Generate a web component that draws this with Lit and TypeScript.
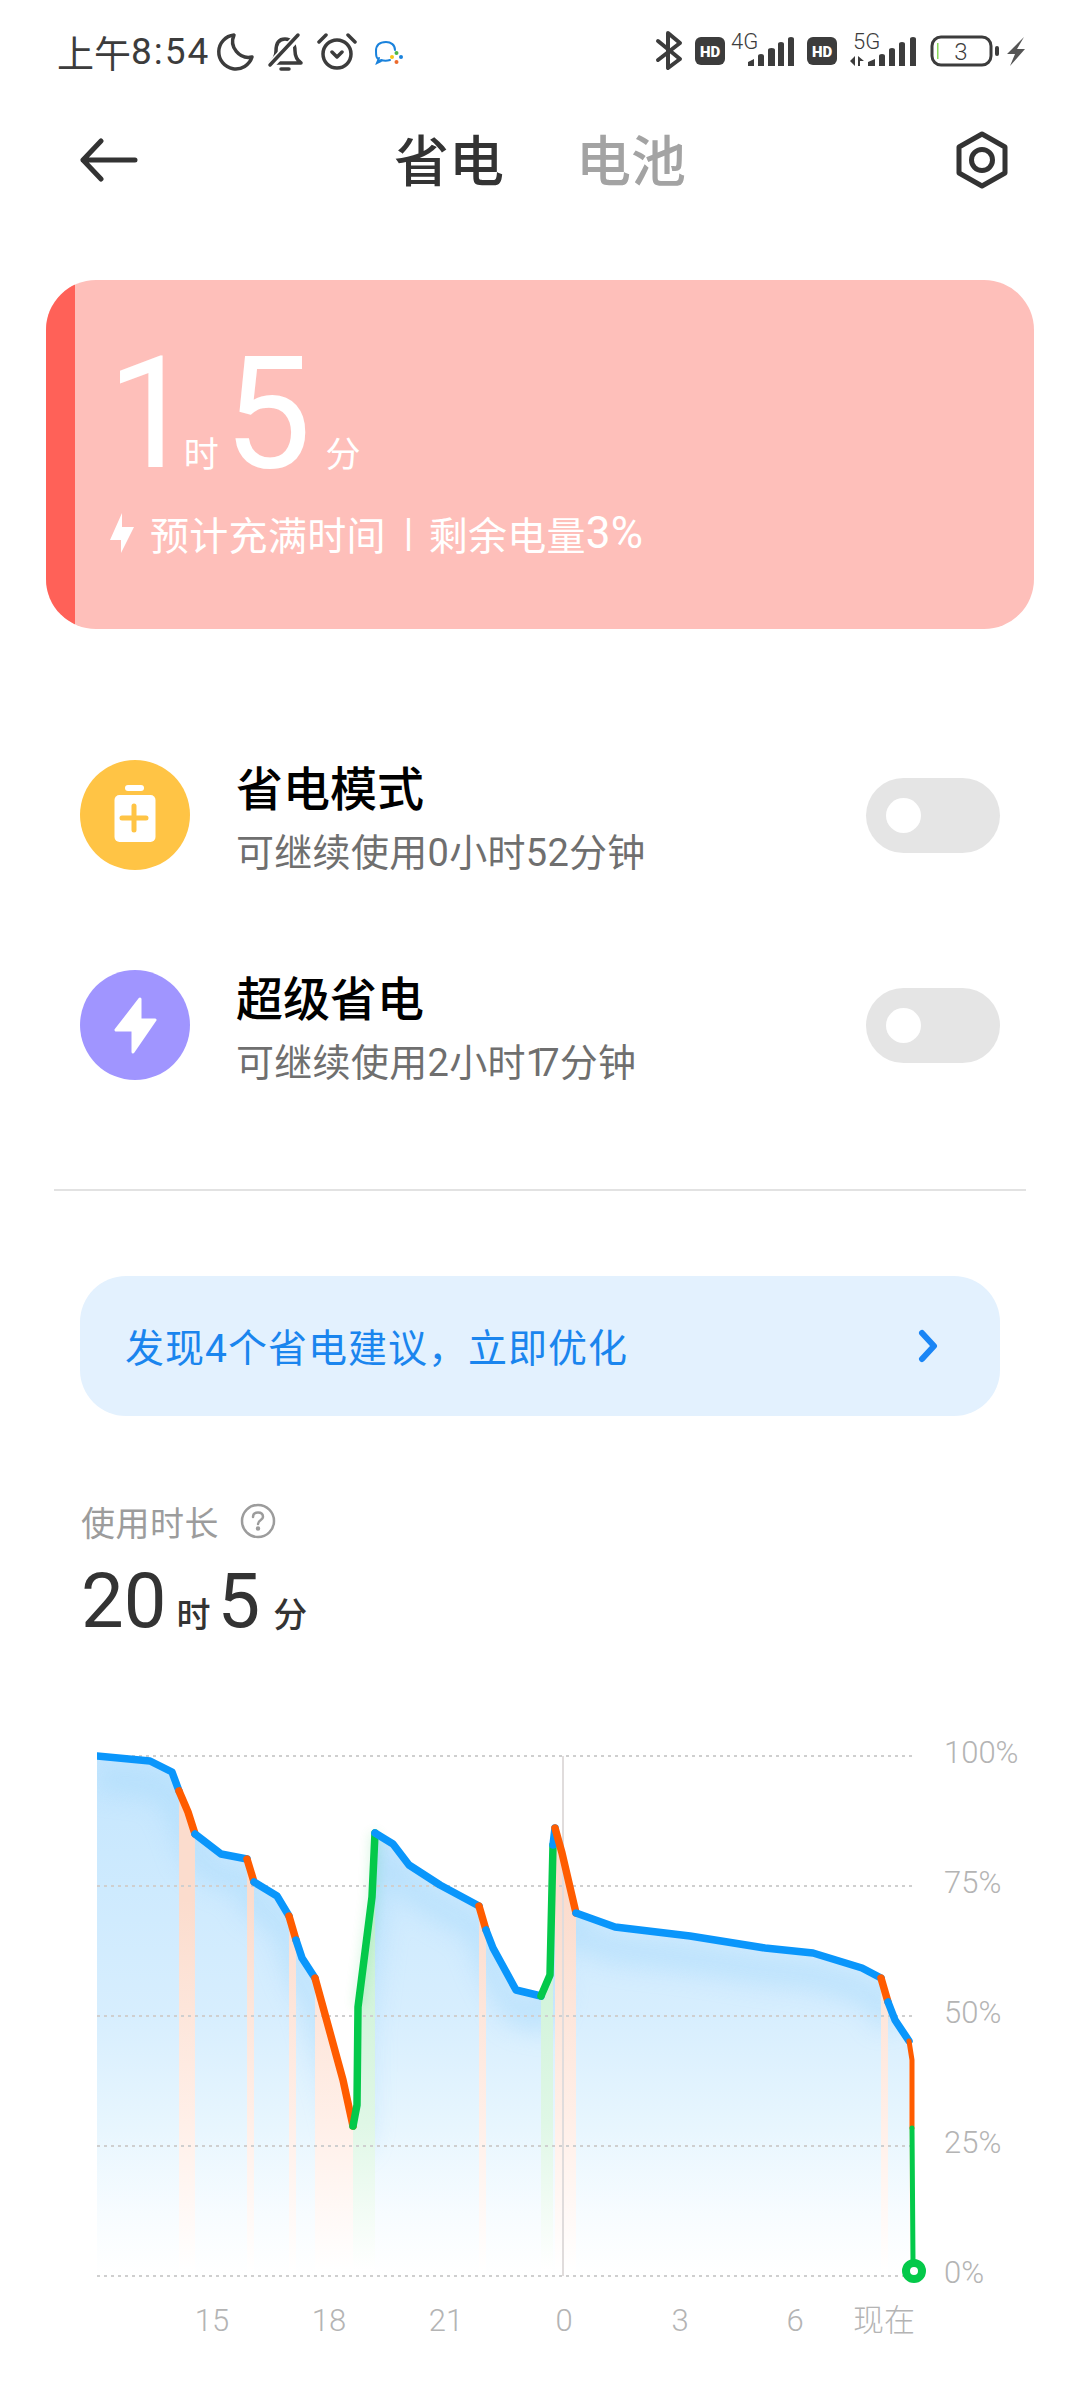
import { LitElement, html, css, svg } from "lit";
import { customElement } from "lit/decorators.js";

type Seg = { color: string; width?: number; pts: [number, number][] };

const BLUE = "#0a96fb";
const ORANGE = "#ff5c00";
const GREEN = "#04c94a";

// chart line, split wherever the colour changes
const SEGMENTS: Seg[] = [
  { color: BLUE, pts: [[97, 1756], [150, 1761], [172, 1772], [179, 1791]] },
  { color: ORANGE, pts: [[179, 1791], [188, 1812], [195, 1834]] },
  { color: BLUE, pts: [[195, 1834], [221, 1854], [247, 1859]] },
  { color: ORANGE, pts: [[247, 1859], [254, 1882]] },
  { color: BLUE, pts: [[254, 1882], [277, 1896], [289, 1916]] },
  { color: ORANGE, pts: [[289, 1916], [296, 1940]] },
  { color: BLUE, pts: [[296, 1940], [302, 1958], [315, 1978]] },
  { color: ORANGE, pts: [[315, 1978], [323, 2007], [343, 2080], [353, 2126]] },
  { color: GREEN, pts: [[353, 2126], [357, 2105], [358, 2007], [372, 1897], [375, 1833]] },
  { color: BLUE, pts: [[375, 1833], [393, 1844], [409, 1865], [440, 1885], [479, 1906]] },
  { color: ORANGE, pts: [[479, 1906], [486, 1930]] },
  { color: BLUE, pts: [[486, 1930], [493, 1948], [516, 1990], [541, 1996]] },
  { color: GREEN, pts: [[541, 1996], [550, 1975], [553, 1845]] },
  { color: BLUE, pts: [[553, 1845], [555, 1828]] },
  { color: ORANGE, pts: [[555, 1828], [562, 1853], [576, 1913]] },
  { color: BLUE, pts: [[576, 1913], [615, 1927], [690, 1936], [765, 1948], [813, 1953], [862, 1968], [881, 1978]] },
  { color: ORANGE, pts: [[881, 1978], [888, 2002]] },
  { color: BLUE, pts: [[888, 2002], [895, 2020], [909, 2041]] },
  { color: ORANGE, width: 5, pts: [[909, 2041], [912, 2060], [912, 2128]] },
  { color: GREEN, width: 5, pts: [[912, 2128], [913, 2262]] },
];

const GRID_Y = [1756, 1886, 2016, 2146, 2276];
const Y_LABELS = ["100%", "75%", "50%", "25%", "0%"];
const X_LABELS: [number, string][] = [
  [212, "15"], [329, "18"], [446, "21"], [564, "0"], [680, "3"], [795, "6"], [884, "现在"],
];

const toPoints = (pts: [number, number][]) => pts.map((p) => p.join(",")).join(" ");
const allPoints = SEGMENTS.flatMap((s) => s.pts);
const AREA = `97,2276 ${toPoints(allPoints)} 914,2276`;

@customElement("app-root")
export class AppRoot extends LitElement {
  static styles = css`
    :host {
      display: block;
      width: 1080px;
      height: 2400px;
      overflow: hidden;
      background: #fff;
      font-family: Roboto, "Noto Sans CJK SC", sans-serif;
    }

    svg {
      display: block;
      flex: none;
    }

    .status {
      display: flex;
      justify-content: space-between;
      align-items: center;
      height: 106px;
      padding: 0 30px 3px 57px;
      box-sizing: border-box;
    }

    .status-left {
      display: flex;
      align-items: center;
      font-size: 37px;
      color: #3c3c3c;
      white-space: nowrap;
    }

    .clock {
      letter-spacing: 2px;
    }

    .moon {
      margin-left: 5px;
    }

    .bell {
      margin-left: 10px;
    }

    .alarm {
      margin-left: 12px;
    }

    .chat {
      margin-left: 11px;
    }

    .nav {
      display: flex;
      align-items: center;
      height: 108px;
      padding: 0 70px 0 80px;
    }

    .tabs {
      display: flex;
      gap: 72px;
      margin: -6px 0 0 256px;
      font-size: 55px;
      font-weight: 500;
      color: #333;
    }

    .tabs .off {
      color: #a3a3a3;
    }

    .gear {
      margin-left: auto;
    }

    .card {
      display: flex;
      height: 349px;
      margin: 66px 46px 0;
      border-radius: 50px;
      overflow: hidden;
      background: #febfba;
      color: #fff;
    }

    .card-bar {
      width: 29px;
      background: #ff6158;
    }

    .card-body {
      padding-left: 32px;
    }

    .big-time {
      display: flex;
      align-items: baseline;
      height: 189px;
      line-height: 196px;
      margin-top: 36px;
      font-size: 35px;
    }

    .big-time b {
      font-size: 156px;
      font-weight: 400;
    }

    .big-time .one {
      letter-spacing: -11px;
    }

    .big-time .hour {
      margin-right: 5px;
    }

    .big-time .minute {
      margin-left: 14px;
    }

    .card-note {
      display: flex;
      align-items: center;
      margin-left: 3px;
      font-size: 39px;
      letter-spacing: 0.3px;
      white-space: nowrap;
    }

    .card-note svg {
      margin-right: 16px;
    }

    .card-note .sep {
      margin: 0 15px 0 18px;
    }

    .card-note .pct {
      font-size: 44px;
    }

    .row {
      display: flex;
      height: 110px;
      padding: 0 80px;
    }

    .row.first {
      margin-top: 131px;
    }

    .row.second {
      margin-top: 100px;
    }

    .row-text {
      margin-left: 46px;
    }

    .row-title {
      font-size: 47px;
      line-height: 60px;
      font-weight: 500;
      color: #000;
    }

    .row-sub {
      margin-top: 8px;
      font-size: 38px;
      line-height: 50px;
      letter-spacing: 0.3px;
      color: #6f6f6f;
      white-space: nowrap;
    }

    .row-sub .narrow {
      letter-spacing: -9px;
    }

    .toggle {
      display: flex;
      align-items: center;
      align-self: center;
      width: 134px;
      height: 75px;
      margin-left: auto;
      padding-left: 20px;
      box-sizing: border-box;
      border-radius: 38px;
      background: #e5e5e5;
    }

    .knob {
      width: 35px;
      height: 35px;
      border-radius: 50%;
      background: #fff;
    }

    .divider {
      height: 2px;
      margin: 109px 54px 0;
      background: #e2e2e2;
    }

    .banner {
      display: flex;
      align-items: center;
      justify-content: space-between;
      height: 140px;
      margin: 85px 80px 0;
      padding: 0 62px 0 45px;
      border-radius: 46px;
      background: #e3f1fe;
      font-size: 39px;
      letter-spacing: 1px;
      color: #1a85ee;
    }

    .banner span {
      margin-bottom: 3px;
    }

    .usage-label {
      display: flex;
      align-items: center;
      gap: 21px;
      height: 44px;
      margin: 83px 0 0 81px;
      font-size: 34px;
      letter-spacing: 0.5px;
      color: #9c9c9c;
    }

    .usage-time {
      display: flex;
      align-items: baseline;
      height: 90px;
      line-height: 90px;
      margin: 13px 0 0 81px;
      font-size: 34px;
      color: #333;
    }

    .usage-time b {
      font-size: 76px;
      font-weight: 400;
    }

    .usage-time span {
      font-weight: 500;
    }

    .usage-time .hour {
      margin: 0 7px 0 10px;
    }

    .usage-time .minute {
      margin-left: 13px;
    }

    .chart {
      margin-top: 54px;
    }

    .chart text {
      font-family: Roboto, "Noto Sans CJK SC", sans-serif;
      font-size: 31px;
      font-weight: 300;
      fill: #b4b4b4;
    }

    .status-right text {
      font-family: Roboto, sans-serif;
      fill: #3c3c3c;
    }
  `;

  private _renderChart() {
    const colored = SEGMENTS.filter((s) => s.color !== BLUE);
    return html`<svg class="chart" width="1080" height="660" viewBox="0 1700 1080 660">
      <defs>
        <linearGradient id="area" gradientUnits="userSpaceOnUse" x1="0" y1="1756" x2="0" y2="2276">
          <stop offset="0" stop-color="#c4e6fe" />
          <stop offset="0.5" stop-color="#d7eefe" />
          <stop offset="0.72" stop-color="#e8f6fe" />
          <stop offset="0.88" stop-color="#f7fcff" />
          <stop offset="1" stop-color="#fff" />
        </linearGradient>
        <linearGradient id="orange" gradientUnits="userSpaceOnUse" x1="0" y1="1900" x2="0" y2="2270">
          <stop offset="0" stop-color="#fbdccd" />
          <stop offset="0.6" stop-color="#ffefe8" />
          <stop offset="1" stop-color="#fff" />
        </linearGradient>
        <linearGradient id="green" gradientUnits="userSpaceOnUse" x1="0" y1="1900" x2="0" y2="2270">
          <stop offset="0" stop-color="#c9f1d3" />
          <stop offset="0.6" stop-color="#dff7e6" />
          <stop offset="1" stop-color="#fff" />
        </linearGradient>
        <clipPath id="under"><polygon points=${AREA} /></clipPath>
        <clipPath id="plot"><rect x="97" y="1740" width="830" height="560" /></clipPath>
        <filter id="soft" x="-10%" y="-10%" width="120%" height="120%">
          <feGaussianBlur stdDeviation="12" />
        </filter>
        <filter id="glow" x="-100%" y="-10%" width="300%" height="120%">
          <feGaussianBlur stdDeviation="6" />
        </filter>
      </defs>
      <polygon points=${AREA} fill="url(#area)" />
      <g clip-path="url(#under)">
        <polyline
          points=${toPoints(allPoints.slice(0, -8).map(([x, y]) => [x, y + 22] as [number, number]))}
          fill="none"
          stroke="#a9dafc"
          stroke-width="26"
          opacity="0.55"
          filter="url(#soft)"
        />
        ${colored.map((s) =>
          svg`<polygon
            points=${`${s.pts[0][0]},2276 ${toPoints(s.pts)} ${s.pts[s.pts.length - 1][0]},2276`}
            fill=${s.color === ORANGE ? "url(#orange)" : "url(#green)"}
          />`,
        )}
      </g>
      <polyline
        points="358,2007 372,1897 375,1833"
        fill="none"
        stroke=${GREEN}
        stroke-width="8"
        opacity="0.18"
        filter="url(#glow)"
      />
      ${GRID_Y.map(
        (y) => svg`<line x1="97" x2="912" y1=${y} y2=${y} stroke="#cfcfcf" stroke-width="2" stroke-dasharray="3 4" />`,
      )}
      <line x1="563" x2="563" y1="1756" y2="2276" stroke="#e0dcdc" stroke-width="2" />
      <g clip-path="url(#plot)">
        ${SEGMENTS.map(
          (s) => svg`<polyline
            points=${toPoints(s.pts)}
            fill="none"
            stroke=${s.color}
            stroke-width=${s.width ?? 7.5}
            stroke-linejoin="round"
            stroke-linecap="round"
          />`,
        )}
      </g>
      <circle cx="914" cy="2271" r="8" fill="#fff" stroke=${GREEN} stroke-width="8" />
      ${GRID_Y.map((y, i) => svg`<text x="944" y=${y + 7}>${Y_LABELS[i]}</text>`)}
      ${X_LABELS.map(([x, t]) => svg`<text x=${x} y="2331" text-anchor="middle">${t}</text>`)}
    </svg>`;
  }

  private _renderStatus() {
    return html`<div class="status">
      <div class="status-left">
        上午<span class="clock">8:54</span>
        <svg class="moon" width="40" height="40" viewBox="0 0 40 40" fill="none" stroke="#3c3c3c" stroke-width="3.5" stroke-linejoin="round">
          <path d="M19 3A17 17 0 1 0 37 25A16 16 0 0 1 19 3Z" />
        </svg>
        <svg class="bell" width="40" height="40" viewBox="0 0 40 40" fill="none" stroke="#3c3c3c" stroke-width="3.5" stroke-linecap="round" stroke-linejoin="round">
          <path d="M5 31H36C32 28 30 25 30 19C30 11 26 7 20 7C14 7 11 11 11 19C11 25 9 28 5 31Z" />
          <path d="M35 2L4 35" stroke="#fff" stroke-width="8" />
          <path d="M33 3L5 33" />
          <path d="M16 37h8" />
        </svg>
        <svg class="alarm" width="40" height="40" viewBox="0 0 40 40" fill="none" stroke="#3c3c3c" stroke-width="3.5" stroke-linecap="round" stroke-linejoin="round">
          <circle cx="20" cy="22" r="14" />
          <path d="M2 10L9 3M38 10L31 3M15 20l5 5l5-5" />
        </svg>
        <svg class="chat" width="40" height="40" viewBox="0 0 40 40" fill="none">
          <path d="M12 29C8 26 8 24 8 19C8 13 12 10 18 10C23 10 27 13 27 18M13 29L9 31L11 26M13 28C16 29 19 29 22 28" stroke="#1a82dc" stroke-width="2" stroke-linecap="round" />
          <circle cx="28.500" cy="21" r="2" fill="#4cb848" />
          <circle cx="24" cy="25" r="2" fill="#f5c518" />
          <circle cx="28.500" cy="30" r="2" fill="#ec6a2c" />
          <circle cx="33" cy="25" r="2" fill="#1a82dc" />
        </svg>
      </div>
      <svg class="status-right" width="400" height="45" viewBox="650 30 400 45">
        <path d="M658 42L680 60L668 69V34L680 44L658 61" fill="none" stroke="#3c3c3c" stroke-width="4" stroke-linecap="round" stroke-linejoin="round" />
        <rect x="695" y="38" width="30" height="28" rx="6" fill="#3c3c3c" />
        <text x="710" y="58" font-size="15" font-weight="900" text-anchor="middle" style="fill:#fff">HD</text>
        <text x="731" y="50" font-size="22" font-weight="300">4G</text>
        <path d="M748 67V63L754 60V67ZM758 67V57Q758 55 761 55Q764 55 764 57V67ZM768 67V51Q768 49 771.500 49Q775 49 775 51V67ZM778 67V45Q778 43 781 43Q784 43 784 45V67ZM788 67V40Q788 38 791 38Q794 38 794 40V67Z" fill="#3c3c3c" />
        <rect x="807" y="38" width="30" height="28" rx="6" fill="#3c3c3c" />
        <text x="822" y="58" font-size="15" font-weight="900" text-anchor="middle" style="fill:#fff">HD</text>
        <text x="853" y="50" font-size="22" font-weight="300">5G</text>
        <path d="M850 62L855 57V67ZM858 57V67H860V62H864Z" fill="#3c3c3c" />
        <path d="M868 67V63L875 60V67ZM879 67V57Q879 55 882 55Q885 55 885 57V67ZM889 67V51Q889 49 892 49Q895 49 895 51V67ZM899 67V45Q899 43 902 43Q905 43 905 45V67ZM910 67V40Q910 38 913 38Q916 38 916 40V67Z" fill="#3c3c3c" />
        <rect x="932" y="38" width="59" height="28" rx="9" fill="none" stroke="#3c3c3c" stroke-width="3" />
        <rect x="937" y="44" width="1.500" height="16" fill="#8ada5a" />
        <text x="961" y="61" font-size="24" font-weight="300" text-anchor="middle">3</text>
        <rect x="995" y="47" width="4" height="10" rx="2" fill="#3c3c3c" />
        <path d="M1024 38L1007 55H1015L1010 67L1025 50H1017Z" fill="#555" />
      </svg>
    </div>`;
  }

  protected render() {
    return html`
      ${this._renderStatus()}
      <div class="nav">
        <svg width="58" height="44" viewBox="0 0 58 44" fill="none" stroke="#333" stroke-width="5" stroke-linecap="round" stroke-linejoin="round">
          <path d="M55 22H3M21 3L3 22L21 41" />
        </svg>
        <div class="tabs"><span>省电</span><span class="off">电池</span></div>
        <svg class="gear" width="56" height="58" viewBox="0 0 56 58" fill="none" stroke="#333" stroke-width="5" stroke-linejoin="round">
          <path d="M28 3L51 16V42L28 55L5 42V16Z" />
          <circle cx="28" cy="29" r="10.500" />
        </svg>
      </div>

      <div class="card">
        <div class="card-bar"></div>
        <div class="card-body">
          <div class="big-time">
            <b class="one">1</b><span class="hour">时</span><b>5</b><span class="minute">分</span>
          </div>
          <div class="card-note">
            <svg width="24" height="40" viewBox="0 0 24 40" fill="#fff"><path d="M12 0L0 27H11V40L24 14H12Z" /></svg>
            预计充满时间<span class="sep">|</span>剩余电量<span class="pct">3%</span>
          </div>
        </div>
      </div>

      <div class="row first">
        <svg width="110" height="110" viewBox="0 0 110 110">
          <circle cx="55" cy="55" r="55" fill="#ffc445" />
          <rect x="45" y="25" width="19" height="6" rx="3" fill="#fff" />
          <rect x="34.500" y="35" width="41" height="47" rx="5" fill="#fff" />
          <path d="M42 58H66M54 46V70" stroke="#ffc445" stroke-width="5" stroke-linecap="round" />
        </svg>
        <div class="row-text">
          <div class="row-title">省电模式</div>
          <div class="row-sub">可继续使用0小时52分钟</div>
        </div>
        <div class="toggle"><div class="knob"></div></div>
      </div>

      <div class="row second">
        <svg width="110" height="110" viewBox="0 0 110 110">
          <circle cx="55" cy="55" r="55" fill="#a095ff" />
          <path d="M60 29L36 60H53V82L75 50H60Z" fill="#fff" stroke="#fff" stroke-width="3" stroke-linejoin="round" />
        </svg>
        <div class="row-text">
          <div class="row-title">超级省电</div>
          <div class="row-sub">可继续使用2小时<span class="narrow">1</span>7分钟</div>
        </div>
        <div class="toggle"><div class="knob"></div></div>
      </div>

      <div class="divider"></div>

      <div class="banner">
        <span>发现4个省电建议，立即优化</span>
        <svg width="20" height="34" viewBox="0 0 20 34" fill="none" stroke="#1a85f5" stroke-width="6" stroke-linecap="round" stroke-linejoin="round">
          <path d="M4 4L16 17L4 30" />
        </svg>
      </div>

      <div class="usage-label">
        使用时长
        <svg width="36" height="36" viewBox="0 0 36 36" fill="none" stroke="#9c9c9c" stroke-width="2.500">
          <circle cx="18" cy="18" r="16" />
          <path d="M13 14C13 11 15 9.500 18 9.500C21 9.500 23 11 23 14C23 17 18 17 18 21" stroke-linecap="round" />
          <circle cx="18" cy="25.500" r="1" fill="#9c9c9c" />
        </svg>
      </div>
      <div class="usage-time">
        <b>20</b><span class="hour">时</span><b>5</b><span class="minute">分</span>
      </div>

      ${this._renderChart()}
    `;
  }
}

declare global {
  interface HTMLElementTagNameMap {
    "app-root": AppRoot;
  }
}
